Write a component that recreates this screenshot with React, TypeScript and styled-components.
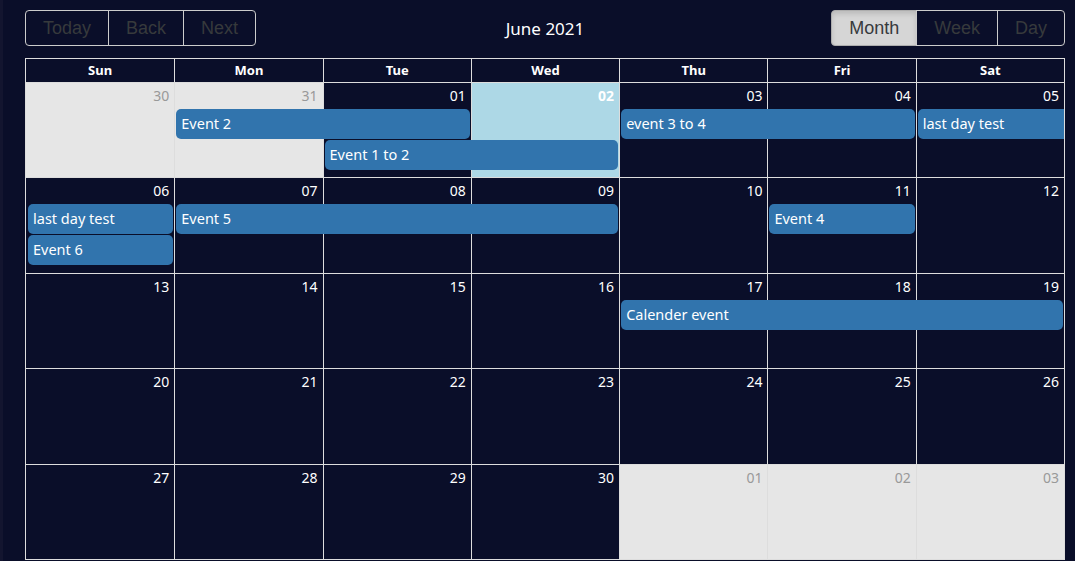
import styled, { createGlobalStyle, css } from "styled-components";

const GlobalStyle = createGlobalStyle`
  html, body {
    margin: 0;
    padding: 0;
    background: #0a0e29;
  }
  * {
    box-sizing: border-box;
  }
`;

const Page = styled.div`
  display: flex;
  min-height: 561px;
  background: #0a0e29;
`;

const EdgeBar = styled.div`
  width: 3px;
  flex-shrink: 0;
  background: #13152f;
`;

const Main = styled.div`
  flex: 1;
  padding: 10px 10px 0 22px;
  display: flex;
  flex-direction: column;
`;

const Toolbar = styled.div`
  display: grid;
  grid-template-columns: 1fr auto 1fr;
  align-items: center;
  height: 36px;
  margin-bottom: 12px;
`;

const ButtonGroup = styled.div<{ $align: "start" | "end" }>`
  display: flex;
  justify-self: ${(p) => p.$align};
  height: 36px;
`;

const ToolButton = styled.button<{ $active?: boolean }>`
  height: 36px;
  padding: 0 17px;
  margin-left: -1px;
  border: 1px solid #ccc;
  border-radius: 0;
  background: transparent;
  color: #373a3c;
  font-family: "Liberation Sans", Arial, sans-serif;
  font-size: 18px;
  cursor: pointer;

  &:first-child {
    margin-left: 0;
    border-radius: 4px 0 0 4px;
  }
  &:last-child {
    border-radius: 0 4px 4px 0;
  }

  ${(p) =>
    p.$active &&
    css`
      background: #d6d6d6;
      border-color: #adadad;
      box-shadow: inset 0 3px 5px rgba(0, 0, 0, 0.125);
    `}
`;

const Title = styled.div`
  color: #fff;
  font-family: "Noto Sans", sans-serif;
  font-size: 17px;
  padding: 0 10px;
`;

const Month = styled.div`
  height: 502px;
  border: 1px solid #ddd;
  display: flex;
  flex-direction: column;
  font-family: "Noto Sans", sans-serif;
`;

const HeaderRow = styled.div`
  display: grid;
  grid-template-columns: repeat(7, 1fr);
  border-bottom: 1px solid #ddd;
`;

const HeaderCell = styled.div`
  height: 23px;
  line-height: 23px;
  text-align: center;
  color: #fff;
  font-size: 13px;
  font-weight: 700;

  & + & {
    border-left: 1px solid #ddd;
  }
`;

const Week = styled.div`
  flex: 1;
  display: grid;
  grid-template-columns: repeat(7, 1fr);
  grid-template-rows: 26px 31px 31px 1fr;

  & + & {
    border-top: 1px solid #ddd;
  }
`;

type DayKind = "normal" | "off" | "today";

const DayBg = styled.div<{ $col: number; $kind: DayKind }>`
  grid-row: 1 / -1;
  grid-column: ${(p) => p.$col};
  border-left: ${(p) => (p.$col === 1 ? "none" : "1px solid #ddd")};
  background: ${(p) =>
    p.$kind === "off" ? "#e6e6e6" : p.$kind === "today" ? "#add8e6" : "transparent"};
`;

const DateLabel = styled.div<{ $col: number; $kind: DayKind }>`
  grid-row: 1;
  grid-column: ${(p) => p.$col};
  text-align: right;
  padding: 3px 5px 0 0;
  font-size: 14px;
  line-height: 20px;
  color: ${(p) => (p.$kind === "off" ? "#999" : "#fff")};
  font-weight: ${(p) => (p.$kind === "today" ? 700 : 400)};
`;

const Event = styled.div<{ $row: number; $col: number; $span: number; $continues?: boolean }>`
  grid-row: ${(p) => p.$row + 1};
  grid-column: ${(p) => `${p.$col} / span ${p.$span}`};
  margin: 0 ${(p) => (p.$continues ? "0" : "1px")} 1px 2px;
  height: 30px;
  line-height: 29px;
  padding: 0 5px;
  background: #3174ad;
  color: #fff;
  font-size: 14.5px;
  border-radius: ${(p) => (p.$continues ? "5px 0 0 5px" : "5px")};
  white-space: nowrap;
  overflow: hidden;
`;

const dayNames = ["Sun", "Mon", "Tue", "Wed", "Thu", "Fri", "Sat"];

type Day = { label: string; kind: DayKind };
type Ev = { title: string; row: number; col: number; span: number; continues?: boolean };

const pad = (n: number) => (n < 10 ? `0${n}` : `${n}`);

const weeks: { days: Day[]; events: Ev[] }[] = [
  {
    days: [
      { label: "30", kind: "off" },
      { label: "31", kind: "off" },
      { label: "01", kind: "normal" },
      { label: "02", kind: "today" },
      { label: "03", kind: "normal" },
      { label: "04", kind: "normal" },
      { label: "05", kind: "normal" },
    ],
    events: [
      { title: "Event 2", row: 1, col: 2, span: 2 },
      { title: "event 3 to 4", row: 1, col: 5, span: 2 },
      { title: "last day test", row: 1, col: 7, span: 1, continues: true },
      { title: "Event 1 to 2", row: 2, col: 3, span: 2 },
    ],
  },
  {
    days: [6, 7, 8, 9, 10, 11, 12].map((d) => ({ label: pad(d), kind: "normal" as DayKind })),
    events: [
      { title: "last day test", row: 1, col: 1, span: 1 },
      { title: "Event 5", row: 1, col: 2, span: 3 },
      { title: "Event 4", row: 1, col: 6, span: 1 },
      { title: "Event 6", row: 2, col: 1, span: 1 },
    ],
  },
  {
    days: [13, 14, 15, 16, 17, 18, 19].map((d) => ({ label: pad(d), kind: "normal" as DayKind })),
    events: [{ title: "Calender event", row: 1, col: 5, span: 3 }],
  },
  {
    days: [20, 21, 22, 23, 24, 25, 26].map((d) => ({ label: pad(d), kind: "normal" as DayKind })),
    events: [],
  },
  {
    days: [
      { label: "27", kind: "normal" },
      { label: "28", kind: "normal" },
      { label: "29", kind: "normal" },
      { label: "30", kind: "normal" },
      { label: "01", kind: "off" },
      { label: "02", kind: "off" },
      { label: "03", kind: "off" },
    ],
    events: [],
  },
];

export default function App() {
  return (
    <Page>
      <GlobalStyle />
      <EdgeBar />
      <Main>
        <Toolbar>
          <ButtonGroup $align="start">
            <ToolButton>Today</ToolButton>
            <ToolButton>Back</ToolButton>
            <ToolButton>Next</ToolButton>
          </ButtonGroup>
          <Title>June 2021</Title>
          <ButtonGroup $align="end">
            <ToolButton $active>Month</ToolButton>
            <ToolButton>Week</ToolButton>
            <ToolButton>Day</ToolButton>
          </ButtonGroup>
        </Toolbar>
        <Month>
          <HeaderRow>
            {dayNames.map((d) => (
              <HeaderCell key={d}>{d}</HeaderCell>
            ))}
          </HeaderRow>
          {weeks.map((week, wi) => (
            <Week key={wi}>
              {week.days.map((day, di) => (
                <DayBg key={`bg${di}`} $col={di + 1} $kind={day.kind} />
              ))}
              {week.days.map((day, di) => (
                <DateLabel key={`d${di}`} $col={di + 1} $kind={day.kind}>
                  {day.label}
                </DateLabel>
              ))}
              {week.events.map((ev, ei) => (
                <Event
                  key={`e${ei}`}
                  $row={ev.row}
                  $col={ev.col}
                  $span={ev.span}
                  $continues={ev.continues}
                >
                  {ev.title}
                </Event>
              ))}
            </Week>
          ))}
        </Month>
      </Main>
    </Page>
  );
}
